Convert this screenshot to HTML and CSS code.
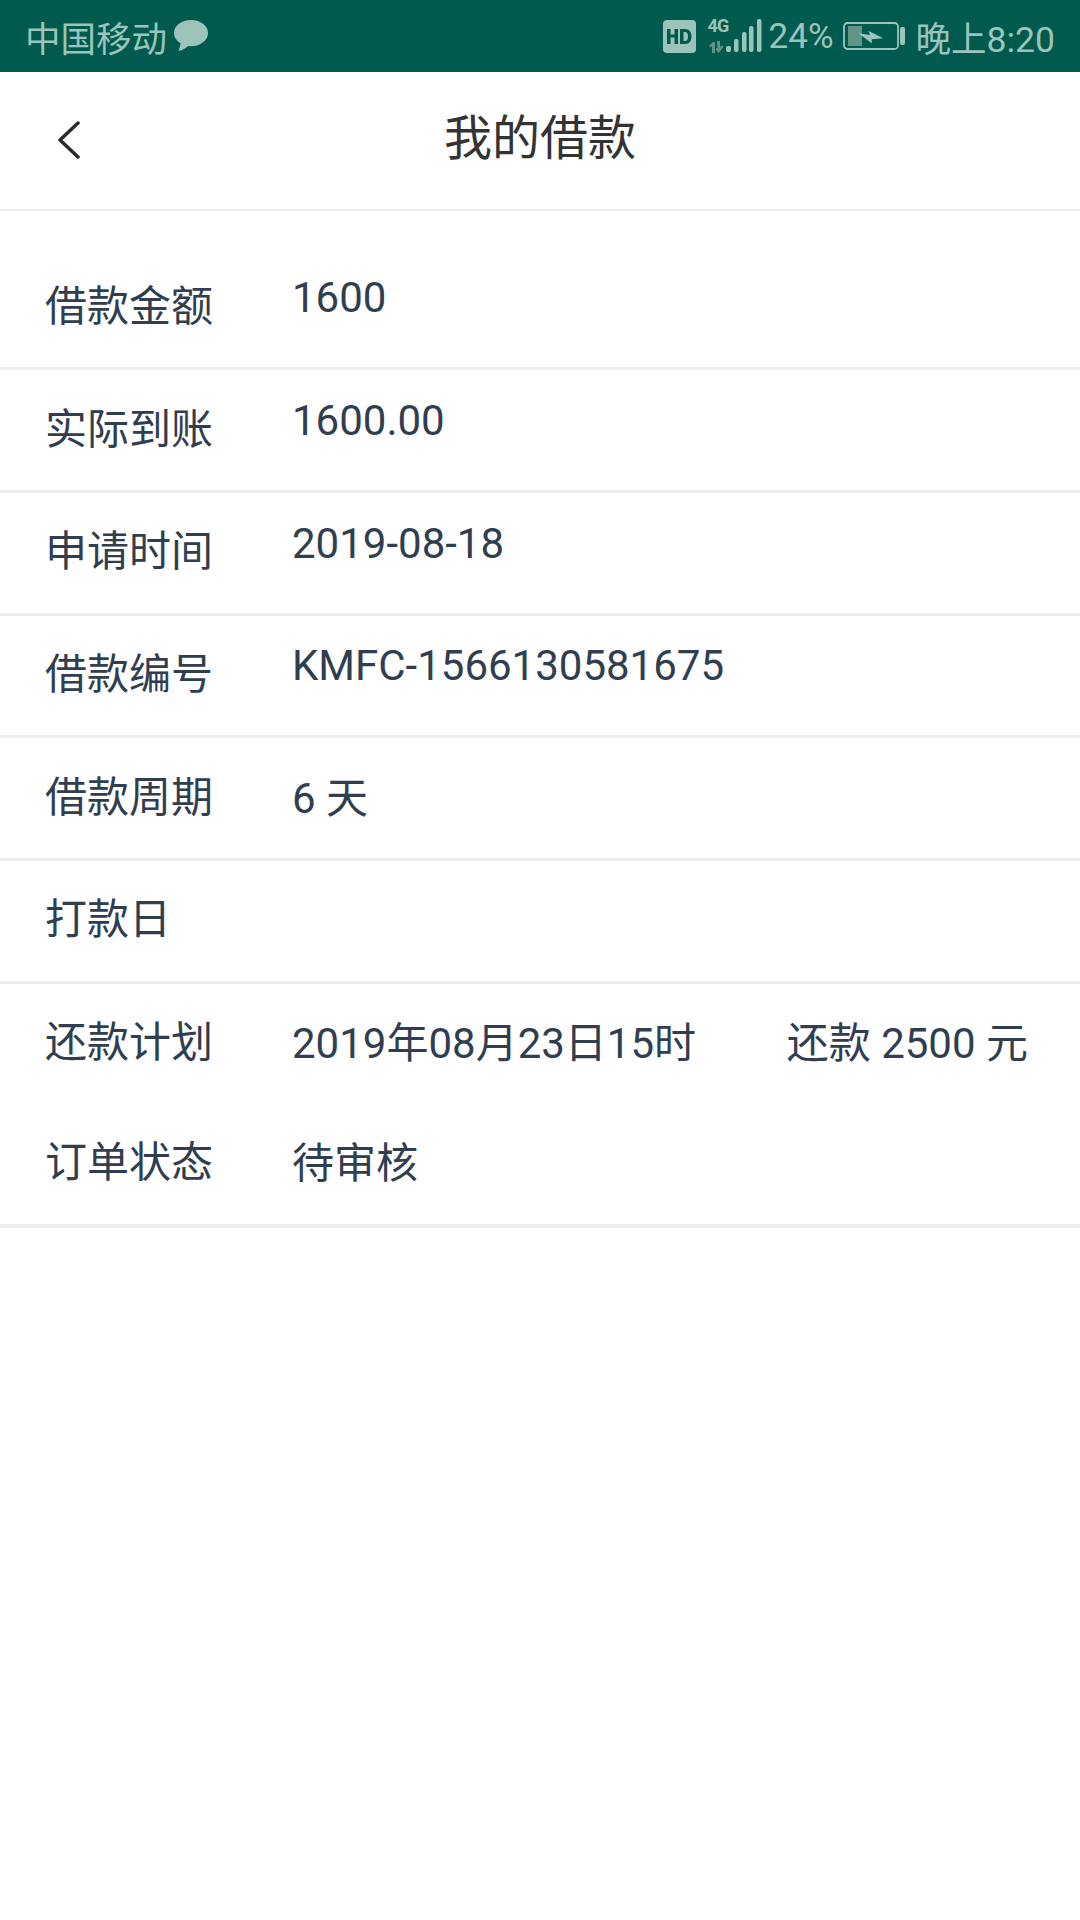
FILE: index.html
```html
<!DOCTYPE html>
<html lang="zh-CN">
<head>
    <meta charset="UTF-8">
    <meta name="viewport" content="width=device-width, initial-scale=1.0" />
    <title>我的借款</title>
    <link rel="stylesheet" href="styles.css">
</head>
<body>
    <div class="status-bar">
        <div class="status-left">
            <span class="carrier">中国移动</span>
            <svg class="msg-icon" width="36" height="34" viewBox="0 0 36 34"><path fill="#9cc4ba" d="M18 1C8.500 1 1 6.600 1 14c0 4.300 2.500 7.900 6.500 10.300C7.300 27 6.300 30 5.500 32c3.500-.5 7-2.500 9.500-5 1 .1 2 .2 3 .2 9.500 0 17-5.800 17-13.200S27.500 1 18 1z"/></svg>
        </div>
        <div class="status-right">
            <svg class="hd-icon" width="33" height="33" viewBox="0 0 33 33">
                <rect width="33" height="33" rx="4" fill="#9cc4ba"/>
                <path fill="#005a4e" d="M4 9h3.500v5.500h4V9H15v15h-3.500v-6.500h-4V24H4zM17 9h5c4.500 0 6.500 3 6.500 7.500S26.500 24 22 24h-5zm3.500 3v9H22c2 0 3-1.800 3-4.500S24 12 22 12z"/>
            </svg>
            <div class="signal">
                <span class="net">4G</span>
                <svg width="54" height="34" viewBox="0 0 54 34">
                    <path fill="#5f9488" d="M1 27l4-4h2v11H4v-7l-1.500 1.500zM9 22h3v6l2-1.500 1.500 1.500-5 6-3-4 1.500-1 .5.500z"/>
                    <rect x="18" y="27" width="5" height="6" rx="2" fill="#9cc4ba"/>
                    <rect x="26" y="20" width="4.500" height="13" rx="2" fill="#9cc4ba"/>
                    <rect x="34" y="13" width="4.500" height="20" rx="2" fill="#9cc4ba"/>
                    <rect x="41" y="7" width="4.500" height="26" rx="2" fill="#9cc4ba"/>
                    <rect x="49" y="0" width="4.500" height="33" rx="2" fill="#9cc4ba"/>
                </svg>
            </div>
            <span class="percent">24%</span>
            <svg class="battery" width="62" height="30" viewBox="0 0 62 30">
                <rect x="1" y="2" width="54" height="26" rx="3.500" fill="none" stroke="#9cc4ba" stroke-width="1.800"/>
                <rect x="5" y="5" width="14" height="20" fill="#5f9488"/>
                <path fill="#9cc4ba" d="M15.300 12.300L27 14l-1.700-4.300 15 7.600-11.600 1v4z"/>
                <rect x="57" y="6" width="5" height="18" rx="2" fill="#9cc4ba"/>
            </svg>
            <span class="clock">晚上8:20</span>
        </div>
    </div>

    <div class="header">
        <a class="back" href="#">
            <svg width="24" height="38" viewBox="0 0 24 38"><path d="M21 2L3 19l18 17" fill="none" stroke="#2b2b2b" stroke-width="3.500" stroke-linecap="round" stroke-linejoin="round"/></svg>
        </a>
        <h1>我的借款</h1>
    </div>

    <div class="details">
        <div class="row">
            <span class="label">借款金额</span>
            <span class="value num">1600</span>
        </div>
        <div class="row">
            <span class="label">实际到账</span>
            <span class="value num">1600.00</span>
        </div>
        <div class="row">
            <span class="label">申请时间</span>
            <span class="value num">2019-08-18</span>
        </div>
        <div class="row">
            <span class="label">借款编号</span>
            <span class="value num">KMFC-1566130581675</span>
        </div>
        <div class="row">
            <span class="label">借款周期</span>
            <span class="value">6 天</span>
        </div>
        <div class="row">
            <span class="label">打款日</span>
            <span class="value"></span>
        </div>
        <div class="row no-line">
            <span class="label">还款计划</span>
            <span class="value plan">
                <span>2019年08月23日15时</span>
                <span>还款 2500 元</span>
            </span>
        </div>
        <div class="row last">
            <span class="label">订单状态</span>
            <span class="value">待审核</span>
        </div>
    </div>
</body>
</html>
```

FILE: styles.css
```css
* {
  box-sizing: border-box;
}
body {
  font-family: Roboto, "Noto Sans CJK SC", sans-serif;
  background-color: #fff;
  margin: 0;
  padding: 0;
}

/* status bar */
.status-bar {
  display: flex;
  justify-content: space-between;
  align-items: center;
  height: 72px;
  padding: 0 25px 0 25px;
  background-color: #005a4e;
  color: #9cc4ba;
}
.status-left,
.status-right {
  display: flex;
  align-items: center;
}
.carrier {
  font-size: 35.5px;
}
.msg-icon {
  margin-left: 6px;
}
.hd-icon {
  margin-right: 12px;
}
.signal {
  position: relative;
  display: flex;
  width: 54px;
}
.net {
  position: absolute;
  top: -2px;
  left: 0;
  font-size: 18px;
  font-weight: 700;
  line-height: 18px;
  letter-spacing: -1px;
}
.percent {
  margin-left: 7px;
  font-size: 35px;
}
.battery {
  margin-left: 9px;
}
.clock {
  margin-left: 11px;
  font-size: 35.5px;
}

/* header */
.header {
  position: relative;
  display: flex;
  justify-content: center;
  align-items: center;
  height: 139px;
  padding-bottom: 13px;
  border-bottom: 2px solid #eeeeee;
}
.header h1 {
  margin: 0;
  font-size: 48px;
  font-weight: 400;
  color: #333;
}
.back {
  position: absolute;
  top: 49px;
  left: 57px;
  display: flex;
}

/* rows */
.details {
  padding-top: 36.5px;
}
.row {
  display: flex;
  align-items: center;
  height: 122.7px;
  padding: 0 43px 8px 45px;
  border-bottom: 3px solid #eeeeee;
  font-size: 42px;
  color: #303e4f;
}
.label {
  width: 247px;
  flex-shrink: 0;
  padding-bottom: 2px;
}
.value {
  flex: 1;
}
.num {
  padding-bottom: 11px;
}
.plan {
  display: flex;
  justify-content: space-between;
  margin-right: 9px;
}
.no-line {
  height: 120px;
  border-bottom: none;
}
.last {
  height: 124.5px;
  border-bottom: 4px solid #eeeeee;
}
```
